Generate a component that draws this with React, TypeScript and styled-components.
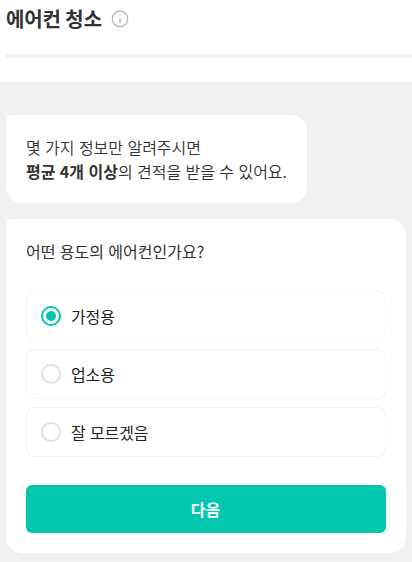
import React, { useState } from 'react';
import styled, { createGlobalStyle, css } from 'styled-components';

const GlobalStyle = createGlobalStyle`
  *, *::before, *::after { box-sizing: border-box; }
  body {
    margin: 0;
    background: #f1f1f1;
    font-family: "Noto Sans CJK KR", sans-serif;
    color: #323232;
    overflow: hidden;
  }
`;

const Header = styled.header`
  height: 82px;
  background: #fff;
`;

const TitleRow = styled.div`
  display: flex;
  align-items: center;
  gap: 9px;
  height: 54px;
  padding: 0 6px 16px;
`;

const Title = styled.h1`
  margin: 0;
  font-size: 20px;
  line-height: 28px;
  font-weight: 700;
  letter-spacing: -0.1px;
`;

const InfoIcon = styled.svg`
  display: block;
  width: 18px;
  height: 18px;
`;

const ProgressTrack = styled.div`
  height: 4px;
  margin-left: 6px;
  background: #f1f1f1;
  border-radius: 2px 0 0 2px;
`;

const Chat = styled.main`
  display: flex;
  flex-direction: column;
  align-items: flex-start;
  gap: 16px;
  height: 480px;
  padding: 33px 6px 0;
`;

const Bubble = styled.section<{ $wide?: boolean }>`
  padding: 20px;
  background: #fff;
  border-radius: 4px 16px 16px 16px;
  ${({ $wide }) => $wide && css`width: 400px; height: 334px;`}
`;

const Message = styled.p`
  margin: 0;
  font-size: 16px;
  line-height: 24px;
  font-weight: 350;
  word-spacing: 0.8px;
  white-space: nowrap;
`;

const Emphasis = styled.strong`
  font-weight: 700;
`;

const Question = styled.h2`
  margin: 0 0 28px;
  font-size: 16px;
  line-height: 24px;
  font-weight: 400;
  word-spacing: 0.8px;
`;

const Options = styled.div`
  display: flex;
  flex-direction: column;
  gap: 8px;
`;

const Option = styled.label`
  display: flex;
  align-items: center;
  gap: 10px;
  height: 50px;
  padding: 0 14px;
  border: 1px solid #f2f2f2;
  border-radius: 8px;
  font-size: 16px;
  line-height: 24px;
  font-weight: 400;
  letter-spacing: -0.1px;
  word-spacing: 0.8px;
  color: #212121;
`;

const Radio = styled.input`
  appearance: none;
  flex: none;
  display: grid;
  place-items: center;
  width: 20px;
  height: 20px;
  margin: 0;
  border: 2px solid #e1e1e1;
  border-radius: 50%;

  &:checked { border-color: #00c7ae; }
  &:checked::before {
    content: "";
    width: 10px;
    height: 10px;
    border-radius: 50%;
    background: #00c7ae;
  }
`;

const NextButton = styled.button`
  display: block;
  width: 100%;
  height: 48px;
  margin-top: 28px;
  padding: 0 1px 0 0;
  border: 0;
  border-radius: 6px;
  background: #00c7ae;
  color: #fff;
  font: 700 16px/24px "Noto Sans CJK KR", sans-serif;
`;

const choices = ['가정용', '업소용', '잘 모르겠음'];

export default function App() {
  const [selected, setSelected] = useState(choices[0]);
  return (
    <>
      <GlobalStyle />
      <Header>
        <TitleRow>
          <Title>에어컨 청소</Title>
          <InfoIcon viewBox="0 0 18 18" fill="none" stroke="#b5b5b5">
            <circle cx="9" cy="9" r="7.8" strokeWidth="1.2" />
            <path d="M9 8v5M9 5v1.4" strokeWidth="1.3" />
          </InfoIcon>
        </TitleRow>
        <ProgressTrack />
      </Header>
      <Chat>
        <Bubble>
          <Message>몇 가지 정보만 알려주시면<br /><Emphasis>평균 4개 이상</Emphasis>의 견적을 받을 수 있어요.</Message>
        </Bubble>
        <Bubble $wide>
          <Question>어떤 용도의 에어컨인가요?</Question>
          <Options>
            {choices.map((choice) => (
              <Option key={choice}>
                <Radio type="radio" name="usage" checked={selected === choice} onChange={() => setSelected(choice)} />
                {choice}
              </Option>
            ))}
          </Options>
          <NextButton type="button">다음</NextButton>
        </Bubble>
      </Chat>
    </>
  );
}
